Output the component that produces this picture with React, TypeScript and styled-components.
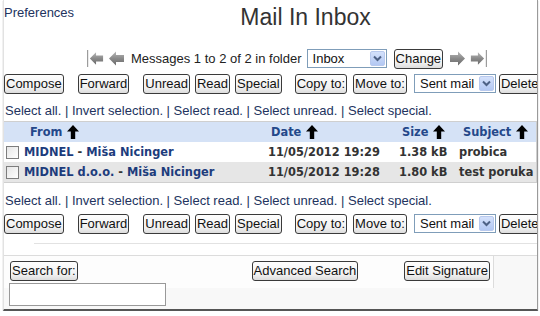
import React from "react";
import styled, { createGlobalStyle } from "styled-components";

const Global = createGlobalStyle`
  html, body { margin: 0; padding: 0; background: #fff; }
  body { font-family: "Liberation Sans", Arial, sans-serif; }
`;

const Frame = styled.div`
  margin-left: 3px;
  width: 533px;
  height: 309px;
  display: flex;
  flex-direction: column;
  border-left: 1px solid #e2e2e2;
  border-right: 1px solid #9a9a9a;
  border-bottom: 2px solid #555;
  box-shadow: 0 1px 1px #aaa;
  background: #fff;
  overflow: hidden;
`;

const TopRow = styled.div`
  height: 47px;
  display: flex;
  align-items: flex-start;
`;

const Prefs = styled.a`
  margin-top: 5px;
  font-size: 13px;
  line-height: 15px;
  color: #22335e;
  text-decoration: none;
`;

const Title = styled.h1`
  flex: 1;
  margin: 3px 0 0;
  text-align: center;
  font-weight: normal;
  font-size: 23px;
  line-height: 28px;
  color: #333;
`;

const NavRow = styled.div`
  height: 23px;
  display: flex;
  align-items: center;
  padding-left: 83px;
  font-size: 13px;
  color: #222;
`;

const NavText = styled.span`
  margin: 0 5px 0 6px;
  white-space: nowrap;
`;

const Spacer = styled.span<{ $w: number }>`
  width: ${(p) => p.$w}px;
  flex: none;
`;

const ButtonRow = styled.div<{ $mt: number }>`
  margin-top: ${(p) => p.$mt}px;
  height: 21px;
  display: flex;
  align-items: center;
`;

const Btn = styled.button<{ $ml?: number }>`
  flex: none;
  font-family: "Liberation Sans", Arial, sans-serif;
  font-size: 13px;
  height: 20px;
  line-height: 16px;
  padding: 0 1px;
  margin: 0 0 0 ${(p) => p.$ml ?? 0}px;
  border: 1px solid #3a3a3a;
  border-radius: 3px;
  background: linear-gradient(#fefefe, #f1f1f1 70%, #dcdcdc);
  color: #111;
  white-space: nowrap;
`;

const SelectBox = styled.div<{ $w: number; $ml?: number }>`
  flex: none;
  width: ${(p) => p.$w}px;
  height: 19px;
  margin-left: ${(p) => p.$ml ?? 0}px;
  box-sizing: border-box;
  border: 1px solid #7f9db9;
  background: #fff;
  display: flex;
  align-items: center;
  justify-content: space-between;
  padding-left: 5px;
  font-size: 13px;
  color: #111;
  white-space: nowrap;
`;

const DropBtn = styled.span`
  flex: none;
  width: 15px;
  height: 15px;
  margin-right: 1px;
  border-radius: 2px;
  background: linear-gradient(#d4e1fb, #b3c8f3);
  border: 1px solid #b8c9ee;
  box-sizing: border-box;
  display: flex;
  align-items: center;
  justify-content: center;
`;

const SelectLinks = styled.div<{ $mt: number }>`
  margin-top: ${(p) => p.$mt}px;
  padding-left: 1px;
  font-size: 13px;
  line-height: 15px;
  height: 15px;
  color: #22335e;
  white-space: nowrap;
`;

const cols = "262px 130px 60px 1fr";

const Table = styled.div`
  margin-top: 3px;
  border: 1px solid #cfcfcf;
  border-left: none;
  font-family: "DejaVu Sans", Verdana, sans-serif;
  font-size: 11.4px;
  font-weight: bold;
`;

const HeadRow = styled.div`
  display: grid;
  grid-template-columns: ${cols};
  height: 20px;
  align-items: center;
  background: #d5e2f6;
  color: #24488a;
`;

const HeadCell = styled.div<{ $pl: number }>`
  padding-left: ${(p) => p.$pl}px;
  display: flex;
  align-items: center;
  gap: 5px;
`;

const Row = styled.div<{ $alt?: boolean }>`
  display: grid;
  grid-template-columns: ${cols};
  height: 20px;
  align-items: center;
  background: ${(p) => (p.$alt ? "#e6e6e6" : "#fff")};
  color: #333;
`;

const Cell = styled.div<{ $pl: number }>`
  padding-left: ${(p) => p.$pl}px;
  white-space: nowrap;
  display: flex;
  align-items: center;
`;

const Name = styled.span`
  color: #1d3c7c;
`;

const Check = styled.span`
  width: 11px;
  height: 11px;
  border: 1px solid #7d7d7d;
  background: linear-gradient(135deg, #e6e6e6, #fff);
  margin-right: 5px;
  flex: none;
`;

const Divider = styled.div`
  margin: 9px 0 0 30px;
  border-top: 1px solid #e2e2e2;
`;

const Panel = styled.div`
  margin-top: 11px;
  flex: 1;
  border-top: 1px solid #dcdcdc;
  background: #f8f8f8;
  display: flex;
  flex-direction: column;
`;

const PanelTop = styled.div`
  width: 490px;
  height: 32px;
  box-sizing: border-box;
  padding: 5px 0 0 6px;
  background: #fdfdfd;
  border-right: 1px solid #dcdcdc;
  display: flex;
  align-items: flex-start;
`;

const SearchInput = styled.div`
  width: 157px;
  height: 23px;
  box-sizing: border-box;
  border: 1px solid #999;
  background: #fff;
  margin: -5px 0 0 5px;
`;

const Chevron = () => (
  <svg width="9" height="7" viewBox="0 0 9 7">
    <polyline points="1,1.5 4.5,5 8,1.5" fill="none" stroke="#4d6185" strokeWidth="2" />
  </svg>
);

const Select = ({ label, w, ml }: { label: string; w: number; ml?: number }) => (
  <SelectBox $w={w} $ml={ml}>
    <span>{label}</span>
    <DropBtn>
      <Chevron />
    </DropBtn>
  </SelectBox>
);

const NavArrow = ({ dir, bar }: { dir: "l" | "r"; bar?: boolean }) => {
  const id = `g${dir}${bar ? "b" : ""}`;
  const arrow =
    dir === "l"
      ? "1,8.5 8,1.5 8,5 16,5 16,12 8,12 8,15.5"
      : "16,8.5 9,1.5 9,5 1,5 1,12 9,12 9,15.5";
  return (
    <svg width="17" height="17" viewBox="0 0 17 17">
      <defs>
        <linearGradient id={id} x1="0" y1="0" x2="0" y2="1">
          <stop offset="0" stopColor="#b8b8b8" />
          <stop offset="0.5" stopColor="#8a8a8a" />
          <stop offset="1" stopColor="#6a6a6a" />
        </linearGradient>
      </defs>
      {bar && dir === "l" && <rect x="0" y="0" width="1.2" height="17" fill="#9c9c9c" />}
      {bar && dir === "r" && <rect x="15.8" y="0" width="1.2" height="17" fill="#9c9c9c" />}
      <polygon
        points={arrow}
        fill={`url(#${id})`}
        transform={bar ? (dir === "l" ? "translate(2,1) scale(0.88)" : "translate(0,1) scale(0.88)") : undefined}
      />
    </svg>
  );
};

const UpArrow = () => (
  <svg width="12" height="14" viewBox="0 0 12 14">
    <polygon points="6,0 12,6.5 8.2,6.5 8.2,14 3.8,14 3.8,6.5 0,6.5" fill="#000" />
  </svg>
);

const Buttons = ({ mt }: { mt: number }) => (
  <ButtonRow $mt={mt}>
    <Btn $ml={0}>Compose</Btn>
    <Btn $ml={14}>Forward</Btn>
    <Btn $ml={14}>Unread</Btn>
    <Btn $ml={5}>Read</Btn>
    <Btn $ml={5}>Special</Btn>
    <Btn $ml={13}>Copy to:</Btn>
    <Btn $ml={6}>Move to:</Btn>
    <Select label="Sent mail" w={82} ml={7} />
    <Btn $ml={3}>Delete</Btn>
  </ButtonRow>
);

const Links = ({ mt }: { mt: number }) => (
  <SelectLinks $mt={mt}>
    Select all. | Invert selection. | Select read. | Select unread. | Select special.
  </SelectLinks>
);

const messages = [
  { org: "MIDNEL", who: "Miša Nicinger", date: "11/05/2012 19:29", size: "1.38 kB", subject: "probica" },
  { org: "MIDNEL d.o.o.", who: "Miša Nicinger", date: "11/05/2012 19:28", size: "1.80 kB", subject: "test poruka" },
];

export default function App() {
  return (
    <>
      <Global />
      <Frame>
        <TopRow>
          <Prefs>Preferences</Prefs>
          <Title>Mail In Inbox</Title>
        </TopRow>
        <NavRow>
          <NavArrow dir="l" bar />
          <Spacer $w={4} />
          <NavArrow dir="l" />
          <NavText>Messages 1 to 2 of 2 in folder</NavText>
          <Select label="Inbox" w={80} />
          <Btn $ml={7}>Change</Btn>
          <Spacer $w={6} />
          <NavArrow dir="r" />
          <Spacer $w={4} />
          <NavArrow dir="r" bar />
        </NavRow>
        <Buttons mt={3} />
        <Links mt={9} />
        <Table>
          <HeadRow>
            <HeadCell $pl={26}>From <UpArrow /></HeadCell>
            <HeadCell $pl={5}>Date <UpArrow /></HeadCell>
            <HeadCell $pl={6}>Size <UpArrow /></HeadCell>
            <HeadCell $pl={7}>Subject <UpArrow /></HeadCell>
          </HeadRow>
          {messages.map((m, i) => (
            <Row key={i} $alt={i % 2 === 1}>
              <Cell $pl={2}>
                <Check />
                <Name>{m.org}</Name>&nbsp;-&nbsp;<Name>{m.who}</Name>
              </Cell>
              <Cell $pl={2}>{m.date}</Cell>
              <Cell $pl={3}>{m.size}</Cell>
              <Cell $pl={3}>{m.subject}</Cell>
            </Row>
          ))}
        </Table>
        <Links mt={10} />
        <Buttons mt={5} />
        <Divider />
        <Panel>
          <PanelTop>
            <Btn>Search for:</Btn>
            <Btn $ml={174}>Advanced Search</Btn>
            <Btn $ml={46}>Edit Signature</Btn>
          </PanelTop>
          <SearchInput />
        </Panel>
      </Frame>
    </>
  );
}
